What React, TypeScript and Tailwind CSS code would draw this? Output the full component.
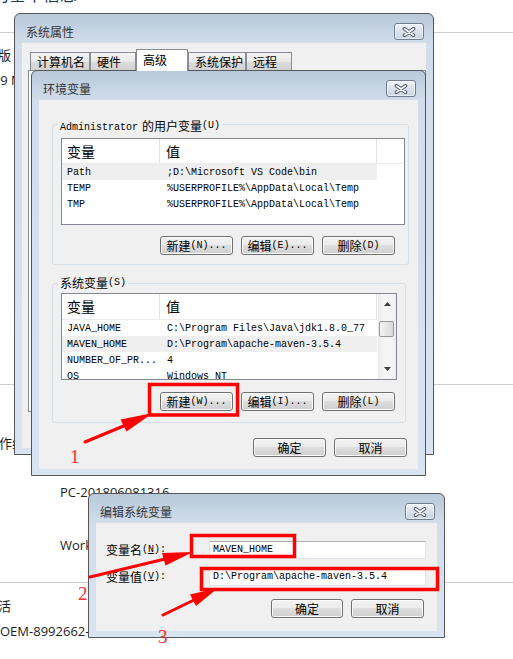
import React from 'react';

const cjk = "font-['Noto_Sans_CJK_SC',sans-serif]";
const mono = "font-['Liberation_Mono','Noto_Sans_CJK_SC',monospace]";
const sans = "font-['Open_Sans','Noto_Sans_CJK_SC',sans-serif]";

function CloseButton() {
  return (
    <div className="mr-[2px] mt-[9px] flex h-[17px] w-[30px] items-center justify-center rounded-[3px] border border-[#6f7e90] bg-[linear-gradient(to_bottom,#eef3f8,#d9e2ec_50%,#c9d5e2)] shadow-[inset_0_0_0_1px_rgba(255,255,255,0.55)]">
      <svg width="14" height="10" viewBox="0 0 14 10">
        <path d="M2.5 1.8 L11.5 8.2 M11.5 1.8 L2.5 8.2" stroke="#4b5563" strokeWidth="3.6" strokeLinecap="round" fill="none" />
        <path d="M2.5 1.8 L11.5 8.2 M11.5 1.8 L2.5 8.2" stroke="#ffffff" strokeWidth="1.7" strokeLinecap="round" fill="none" />
      </svg>
    </div>
  );
}

function Win({ title, className, children }: { title: string; className: string; children?: React.ReactNode }) {
  return (
    <div
      className={`absolute flex flex-col rounded-t-[6px] border border-[#565656] bg-[linear-gradient(to_bottom,#b8c9db,#d1ddea_29px,#d8e4f1)] px-[7px] pb-[6px] ${className}`}
    >
      <div className="flex h-[29px] shrink-0 items-start justify-between">
        <span className={`${cjk} mt-[10px] pl-[4px] text-[12px] leading-[16px] text-[#333]`}>{title}</span>
        <CloseButton />
      </div>
      <div className="flex-1 overflow-hidden bg-[#f0f0f0]">{children}</div>
    </div>
  );
}

function Btn({ w, children }: { w: string; children: React.ReactNode }) {
  return (
    <div
      className={`flex h-[19px] ${w} items-center justify-center rounded-[3px] border border-[#707070] bg-[linear-gradient(to_bottom,#f3f3f3,#ebebeb_45%,#dddddd_50%,#cfcfcf)] text-black shadow-[inset_0_0_0_1px_#fbfbfb]`}
    >
      {children}
    </div>
  );
}

function Cj({ children }: { children: React.ReactNode }) {
  return <span className={`${cjk} text-[12px] leading-[14px]`}>{children}</span>;
}

function Mo({ children }: { children: React.ReactNode }) {
  return <span className={`${mono} text-[10px] leading-[14px]`}>{children}</span>;
}

function Header({ filler, h }: { filler?: boolean; h: string }) {
  return (
    <div className={`${cjk} flex ${h} shrink-0 border-b border-[#ececec] text-[14px] leading-[24px] text-black`}>
      <div className="w-[98px] border-r border-[#e3e3e3] pl-[5px]">变量</div>
      <div className="w-[217px] border-r border-[#e3e3e3] pl-[6px]">值</div>
      {filler && <div className="flex-1" />}
    </div>
  );
}

function Row({ name, value, selected }: { name: string; value: string; selected?: boolean }) {
  return (
    <div className={`${mono} flex h-[16px] w-[315px] shrink-0 pt-[2px] text-[10px] leading-[14px] text-black ${selected ? 'bg-[#efefef]' : ''}`}>
      <div className="w-[99px] overflow-hidden whitespace-nowrap pl-[5px]">{name}</div>
      <div className="overflow-hidden whitespace-nowrap pl-[6px]">{value}</div>
    </div>
  );
}

function ScrollBar() {
  return (
    <div className="flex w-[18px] shrink-0 flex-col bg-[linear-gradient(to_right,#eaeaea,#f5f5f5_30%,#f5f5f5_70%,#eeeeee)]">
      <div className="flex h-[20px] items-center justify-center">
        <svg width="7" height="4" viewBox="0 0 7 4">
          <path d="M3.5 0 L7 4 L0 4 Z" fill="#3c3c3c" />
        </svg>
      </div>
      <div className="ml-[1px] mt-[7px] h-[16px] w-[15px] rounded-[2px] border border-[#979797] bg-[linear-gradient(to_right,#f4f4f4,#e6e6e6_50%,#d9d9d9)]" />
      <div className="flex-1" />
      <div className="flex h-[20px] items-center justify-center">
        <svg width="7" height="4" viewBox="0 0 7 4">
          <path d="M0 0 L7 0 L3.5 4 Z" fill="#3c3c3c" />
        </svg>
      </div>
    </div>
  );
}

const userVars = [
  { name: 'Path', value: ';D:\\Microsoft VS Code\\bin', selected: true },
  { name: 'TEMP', value: '%USERPROFILE%\\AppData\\Local\\Temp' },
  { name: 'TMP', value: '%USERPROFILE%\\AppData\\Local\\Temp' },
];

const sysVars = [
  { name: 'JAVA_HOME', value: 'C:\\Program Files\\Java\\jdk1.8.0_77' },
  { name: 'MAVEN_HOME', value: 'D:\\Program\\apache-maven-3.5.4', selected: true },
  { name: 'NUMBER_OF_PR...', value: '4' },
  { name: 'OS', value: 'Windows_NT' },
];

const tabs = [
  { label: '计算机名', w: 'w-[60px]' },
  { label: '硬件', w: 'w-[46px]' },
  { label: '高级', w: 'w-[52px]', active: true },
  { label: '系统保护', w: 'w-[58px]' },
  { label: '远程', w: 'w-[46px]' },
];

function Background() {
  return (
    <>
      <div className="absolute left-0 top-[32px] h-px w-full bg-[#cdcdcd]" />
      <div className="absolute left-0 top-[384px] h-px w-full bg-[#cdcdcd]" />
      <div className="absolute left-0 top-[582px] h-px w-full bg-[#cdcdcd]" />
      <span className={`${cjk} absolute left-[-8px] top-[-16px] whitespace-nowrap text-[17px] leading-[20px] text-[#1e395b]`}>的基本信息</span>
      <span className={`${cjk} absolute left-[-28px] top-[47px] whitespace-nowrap text-[13px] leading-[16px] text-[#1e1e1e]`}>旗舰版</span>
      <span className={`${sans} absolute left-[-22px] top-[71px] whitespace-nowrap text-[13px] leading-[18px] text-[#1e1e1e]`}>2009 M</span>
      <span className={`${cjk} absolute left-[-14px] top-[435px] whitespace-nowrap text-[13px] leading-[16px] text-[#1e1e1e]`}>工作组</span>
      <span className={`${sans} absolute left-[60px] top-[483px] whitespace-nowrap text-[13px] leading-[18px] text-[#1e1e1e]`}>PC-201806081316</span>
      <span className={`${sans} absolute left-[60px] top-[536px] whitespace-nowrap text-[13px] leading-[18px] text-[#1e1e1e]`}>Work</span>
      <span className={`${cjk} absolute left-[-15px] top-[598px] whitespace-nowrap text-[13px] leading-[16px] text-[#1e1e1e]`}>激活</span>
      <span className={`${sans} absolute left-0 top-[622px] whitespace-nowrap text-[13px] leading-[18px] text-[#1e1e1e]`}>OEM-8992662-</span>
    </>
  );
}

function SystemProperties() {
  return (
    <Win title="系统属性" className="left-[14px] top-[13px] h-[442px] w-[420px]">
      <div className="ml-[8px] mt-[6px] flex h-[21px] items-end">
        {tabs.map((t) =>
          t.active ? (
            <div
              key={t.label}
              className={`${cjk} relative z-10 -mb-px h-[22px] ${t.w} border border-b-0 border-[#898c95] bg-white pl-[6px] text-[12px] leading-[20px] text-black`}
            >
              {t.label}
            </div>
          ) : (
            <div
              key={t.label}
              className={`${cjk} h-[18px] ${t.w} border border-b-0 border-[#898c95] bg-[linear-gradient(to_bottom,#f4f4f4,#e9e9e9_50%,#dcdcdc_50%,#d2d2d2)] pl-[6px] text-[12px] leading-[18px] text-black`}
            >
              {t.label}
            </div>
          )
        )}
      </div>
      <div className="ml-[6px] h-[342px] w-[398px] border border-[#898c95] bg-white" />
    </Win>
  );
}

function EnvironmentVariables() {
  return (
    <Win title="环境变量" className="left-[31px] top-[70px] h-[406px] w-[395px]">
      <div className="flex flex-col pl-[13px] pt-[24px]">
        <div className="relative h-[141px] w-[357px] rounded-[3px] border border-[#d5dfe5]">
          <div className="absolute left-[5px] top-[-8px] flex items-center bg-[#f0f0f0] px-[2px] leading-[14px]">
            <span className="mr-[4px]"><Mo>Administrator</Mo></span>
            <Cj>的用户变量</Cj>
            <Mo>(U)</Mo>
          </div>
          <div className="ml-[8px] mt-[13px] flex h-[87px] w-[344px] flex-col overflow-hidden border border-[#828790] bg-white">
            <Header filler h="h-[25px]" />
            {userVars.map((v) => (
              <Row key={v.name} {...v} />
            ))}
          </div>
          <div className="ml-[107px] mt-[11px] flex gap-[8px]">
            <Btn w="w-[73px]"><Cj>新建</Cj><Mo>(N)...</Mo></Btn>
            <Btn w="w-[73px]"><Cj>编辑</Cj><Mo>(E)...</Mo></Btn>
            <Btn w="w-[73px]"><Cj>删除</Cj><Mo>(D)</Mo></Btn>
          </div>
        </div>

        <div className="relative mt-[18px] h-[140px] w-[354px] rounded-[3px] border border-[#d5dfe5]">
          <div className="absolute left-[5px] top-[-8px] flex items-center bg-[#f0f0f0] px-[2px] leading-[14px]">
            <Cj>系统变量</Cj>
            <Mo>(S)</Mo>
          </div>
          <div className="ml-[8px] mt-[9px] flex h-[87px] w-[336px] overflow-hidden border border-[#828790] bg-white">
            <div className="flex w-[316px] flex-col overflow-hidden">
              <Header h="h-[26px]" />
              {sysVars.map((v) => (
                <Row key={v.name} {...v} />
              ))}
            </div>
            <ScrollBar />
          </div>
          <div className="ml-[107px] mt-[12px] flex gap-[8px]">
            <Btn w="w-[73px]"><Cj>新建</Cj><Mo>(W)...</Mo></Btn>
            <Btn w="w-[73px]"><Cj>编辑</Cj><Mo>(I)...</Mo></Btn>
            <Btn w="w-[73px]"><Cj>删除</Cj><Mo>(L)</Mo></Btn>
          </div>
        </div>

        <div className="mr-[11px] mt-[15px] flex justify-end gap-[8px]">
          <Btn w="w-[73px]"><Cj>确定</Cj></Btn>
          <Btn w="w-[73px]"><Cj>取消</Cj></Btn>
        </div>
      </div>
    </Win>
  );
}

function EditVariable() {
  return (
    <Win title="编辑系统变量" className="left-[88px] top-[493px] h-[145px] w-[357px]">
      <div className="flex flex-col pl-[10px] pr-[11px] pt-[18px]">
        <div className="flex h-[18px] items-center justify-between">
          <div className="flex items-center">
            <Cj>变量名</Cj>
            <Mo>(<span className="underline">N</span>):</Mo>
          </div>
          <div className={`${mono} h-[18px] w-[217px] border border-[#dfe3e9] border-t-[#abadb3] bg-white pl-[3px] text-[10px] leading-[16px] text-black`}>
            MAVEN_HOME
          </div>
        </div>
        <div className="mt-[9px] flex h-[18px] items-center justify-between">
          <div className="flex items-center">
            <Cj>变量值</Cj>
            <Mo>(<span className="underline">V</span>):</Mo>
          </div>
          <div className={`${mono} h-[18px] w-[217px] border border-[#dfe3e9] border-t-[#abadb3] bg-white pl-[3px] text-[10px] leading-[16px] text-black`}>
            D:\Program\apache-maven-3.5.4
          </div>
        </div>
        <div className="mr-[2px] mt-[13px] flex justify-end gap-[8px]">
          <Btn w="w-[72px]"><Cj>确定</Cj></Btn>
          <Btn w="w-[73px]"><Cj>取消</Cj></Btn>
        </div>
      </div>
    </Win>
  );
}

function Annotations() {
  return (
    <svg className="pointer-events-none absolute left-0 top-0" width="513" height="659" viewBox="0 0 513 659">
      <g fill="none" stroke="#ff0000" strokeWidth="3.5">
        <rect x="149.5" y="384.5" width="88" height="30.5" />
        <rect x="191.5" y="535.5" width="103" height="21" />
        <rect x="201.5" y="568.5" width="236" height="21" />
      </g>
      <g stroke="#ff0000" strokeWidth="3" strokeLinecap="round">
        <line x1="85" y1="442" x2="126" y2="425" />
        <line x1="90" y1="577" x2="165" y2="559" />
        <line x1="163" y1="615" x2="194" y2="600" />
      </g>
      <g fill="#ff0000">
        <polygon points="153,413 126.5,431.5 120.5,419.5" />
        <polygon points="193,552 165.5,565.5 162,553" />
        <polygon points="218,588 196,606 190,594.5" />
      </g>
      <g fill="#ff2a2a" fontFamily="'Liberation Serif', serif" fontSize="19">
        <text x="70" y="463">1</text>
        <text x="78" y="600">2</text>
        <text x="158" y="643">3</text>
      </g>
    </svg>
  );
}

export default function App() {
  return (
    <div className="relative h-[659px] w-[513px] overflow-hidden bg-white">
      <Background />
      <SystemProperties />
      <EnvironmentVariables />
      <EditVariable />
      <Annotations />
    </div>
  );
}
